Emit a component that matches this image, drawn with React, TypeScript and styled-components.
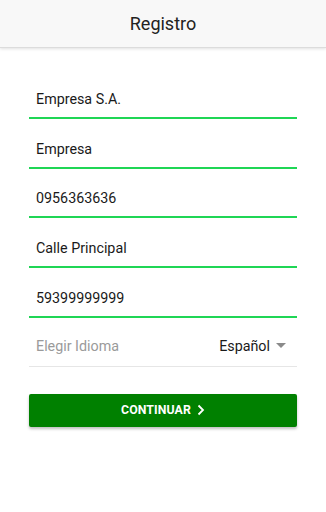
import styled, { createGlobalStyle } from 'styled-components';

const GlobalStyle = createGlobalStyle`
  html, body {
    margin: 0;
    padding: 0;
    background: #ffffff;
    font-family: Roboto, "Liberation Sans", Arial, sans-serif;
  }
`;

const Page = styled.div`
  width: 326px;
  height: 512px;
  background: #fff;
`;

const Header = styled.header`
  height: 47px;
  background: #f8f8f8;
  border-bottom: 1px solid #dcdcdc;
  box-shadow: 0 1px 3px rgba(0, 0, 0, 0.12);
  display: flex;
  align-items: center;
  justify-content: center;
`;

const Title = styled.h1`
  margin: 0;
  font-size: 18px;
  font-weight: 400;
  color: #222;
`;

const Form = styled.div`
  padding: 21px 29px 0 29px;
  display: flex;
  flex-direction: column;
`;

const Field = styled.div<{ $focused?: boolean }>`
  height: ${p => (p.$focused ? '49.8px' : '49px')};
  display: flex;
  align-items: flex-end;
  padding: 0 0 ${p => (p.$focused ? '10px' : '12px')} 7px;
  line-height: 16px;
  border-bottom: ${p => (p.$focused ? '2px solid #1fd655' : '1px solid #e6e6e6')};
  box-sizing: border-box;
  font-size: 14.3px;
  color: #1a1a1a;
`;

const Placeholder = styled.span`
  flex: 1;
  color: #9a9a9a;
`;

const Select = styled.span`
  display: flex;
  align-items: center;
  gap: 6px;
  color: #1a1a1a;
  padding-right: 11px;
`;

const Caret = styled.span`
  width: 0;
  height: 0;
  border-left: 5px solid transparent;
  border-right: 5px solid transparent;
  border-top: 5px solid #8a8a8a;
`;

const Button = styled.button`
  margin-top: 27px;
  height: 33px;
  border: none;
  border-radius: 2px;
  background: #008000;
  color: #fff;
  font-family: inherit;
  font-size: 12.3px;
  font-weight: 700;
  letter-spacing: 0.1px;
  display: flex;
  align-items: center;
  justify-content: center;
  gap: 6px;
  box-shadow: 0 2px 3px rgba(0, 0, 0, 0.25);
`;

const values = ['Empresa S.A.', 'Empresa', '0956363636', 'Calle Principal', '59399999999'];

export default function App() {
  return (
    <Page>
      <GlobalStyle />
      <Header>
        <Title>Registro</Title>
      </Header>
      <Form>
        {values.map(v => (
          <Field key={v} $focused>
            {v}
          </Field>
        ))}
        <Field>
          <Placeholder>Elegir Idioma</Placeholder>
          <Select>
            Español <Caret />
          </Select>
        </Field>
        <Button>
          CONTINUAR
          <svg width="8" height="12" viewBox="0 0 8 12" fill="none">
            <path d="M1.5 1.5 6 6l-4.5 4.5" stroke="#fff" strokeWidth="1.8" />
          </svg>
        </Button>
      </Form>
    </Page>
  );
}
